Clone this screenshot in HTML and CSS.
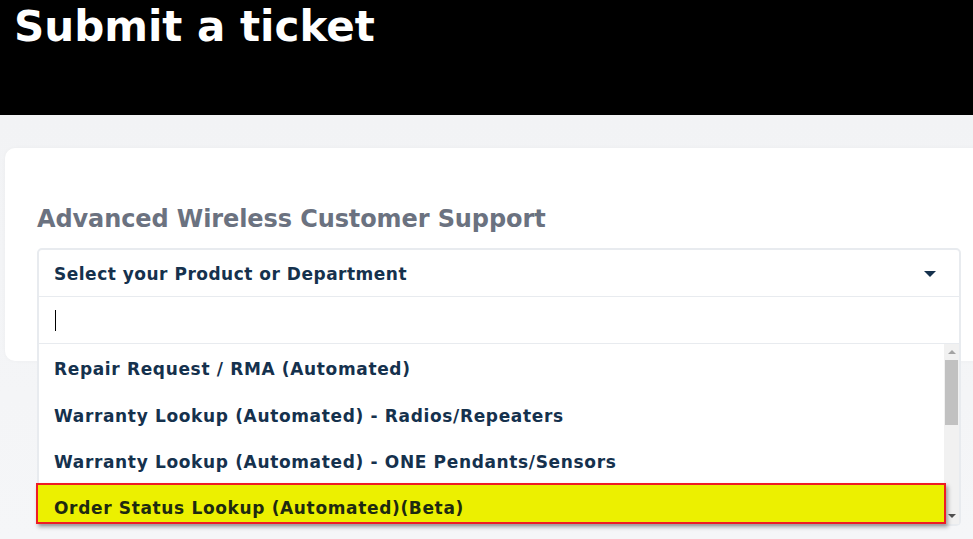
FILE: index.html
```html
<!DOCTYPE html>
<html lang="en">
<head>
  <meta charset="UTF-8">
  <title>Submit a ticket</title>
  <link rel="stylesheet" href="styles.css">
</head>
<body>
  <div class="cabecera">
    <h1 class="titulo">Submit a ticket</h1>
  </div>
  <div class="contenido">
    <div class="tarjeta">
      <h2 class="tarjeta-titulo">Advanced Wireless Customer Support</h2>
      <div class="selector">
        <div class="selector-valor">
          <span>Select your Product or Department</span>
          <span class="flecha"></span>
        </div>
        <div class="desplegable">
          <div class="busqueda"><span class="cursor"></span></div>
          <div class="lista">
            <ul class="opciones">
              <li class="opcion">Repair Request / RMA (Automated)</li>
              <li class="opcion">Warranty Lookup (Automated) - Radios/Repeaters</li>
              <li class="opcion">Warranty Lookup (Automated) - ONE Pendants/Sensors</li>
              <li class="opcion activa">Order Status Lookup (Automated)(Beta)</li>
            </ul>
            <div class="scroll">
              <span class="scroll-arriba"></span>
              <span class="scroll-pulgar"></span>
              <span class="scroll-abajo"></span>
            </div>
          </div>
        </div>
      </div>
    </div>
  </div>
</body>
</html>
```

FILE: styles.css
```css
* {
  margin: 0;
  padding: 0;
  box-sizing: border-box;
}
body {
  height: 100vh;
  background: #f3f4f6;
  font-family: 'DejaVu Sans', Verdana, sans-serif;
  overflow: hidden;
}
.cabecera {
  background: #000;
  height: 115px;
  padding: 5px 14px;
}
.titulo {
  color: #fff;
  font-size: 42px;
  font-weight: bold;
  line-height: 44px;
}
.contenido {
  background: linear-gradient(to bottom, #f2f3f5 0%, #f5f6f8 100%);
  padding: 33px 0 0 5px;
  height: calc(100vh - 115px);
}
.tarjeta {
  background: #fff;
  width: 990px;
  height: 213px;
  border-radius: 10px;
  padding: 57px 0 0 32px;
  box-shadow: 0 0 4px rgba(0,0,0,0.03);
}
.tarjeta-titulo {
  color: #6b7280;
  font-size: 24px;
  font-weight: bold;
  line-height: 28px;
  letter-spacing: -0.1px;
}
.selector {
  position: relative;
  width: 924px;
  margin-top: 15px;
}
.selector-valor {
  display: flex;
  justify-content: space-between;
  align-items: center;
  height: 49px;
  border: 2px solid #e8ebef;
  border-bottom: 1px solid #e8ebef;
  border-radius: 5px 5px 0 0;
  padding: 2px 23px 0 15px;
  color: #15314d;
  font-size: 17px;
  font-weight: bold;
  letter-spacing: 0.5px;
}
.flecha {
  width: 0;
  height: 0;
  border-left: 6px solid transparent;
  border-right: 6px solid transparent;
  border-top: 6px solid #15314d;
}
.desplegable {
  position: absolute;
  top: 49px;
  left: 0;
  width: 100%;
  background: #fff;
  border: 2px solid #e8ebef;
  border-top: none;
  border-radius: 0 0 5px 5px;
  z-index: 5;
}
.busqueda {
  height: 47px;
  border-bottom: 1px solid #e8ebef;
  padding: 13px 16px;
}
.cursor {
  display: block;
  width: 1px;
  height: 21px;
  background: #000;
}
.lista {
  display: flex;
  height: 180px;
}
.opciones {
  list-style: none;
  flex: 1;
  padding-top: 2px;
}
.opcion {
  height: 46.5px;
  line-height: 46px;
  padding-left: 15px;
  color: #15314d;
  font-size: 17px;
  font-weight: bold;
  letter-spacing: 0.65px;
  white-space: nowrap;
}
.opcion.activa {
  background: #ecf000;
  border: 2px solid #ee1c24;
  margin: -2.5px -2px 0 -3px;
  padding: 9px 0 0 16px;
  line-height: 28px;
  height: 41px;
  color: #1e2a10;
  box-shadow: 2px 3px 4px rgba(0,0,0,0.35);
  position: relative;
}
.scroll {
  width: 15px;
  background: #f1f1f1;
  display: flex;
  flex-direction: column;
  align-items: center;
}
.scroll-arriba,
.scroll-abajo {
  width: 0;
  height: 0;
  border-left: 4px solid transparent;
  border-right: 4px solid transparent;
  margin: 6px 0;
}
.scroll-arriba {
  border-bottom: 4px solid #a3a3a3;
}
.scroll-abajo {
  border-top: 4px solid #505050;
  margin-top: auto;
}
.scroll-pulgar {
  width: 13px;
  height: 65px;
  background: #c1c1c1;
}
```
